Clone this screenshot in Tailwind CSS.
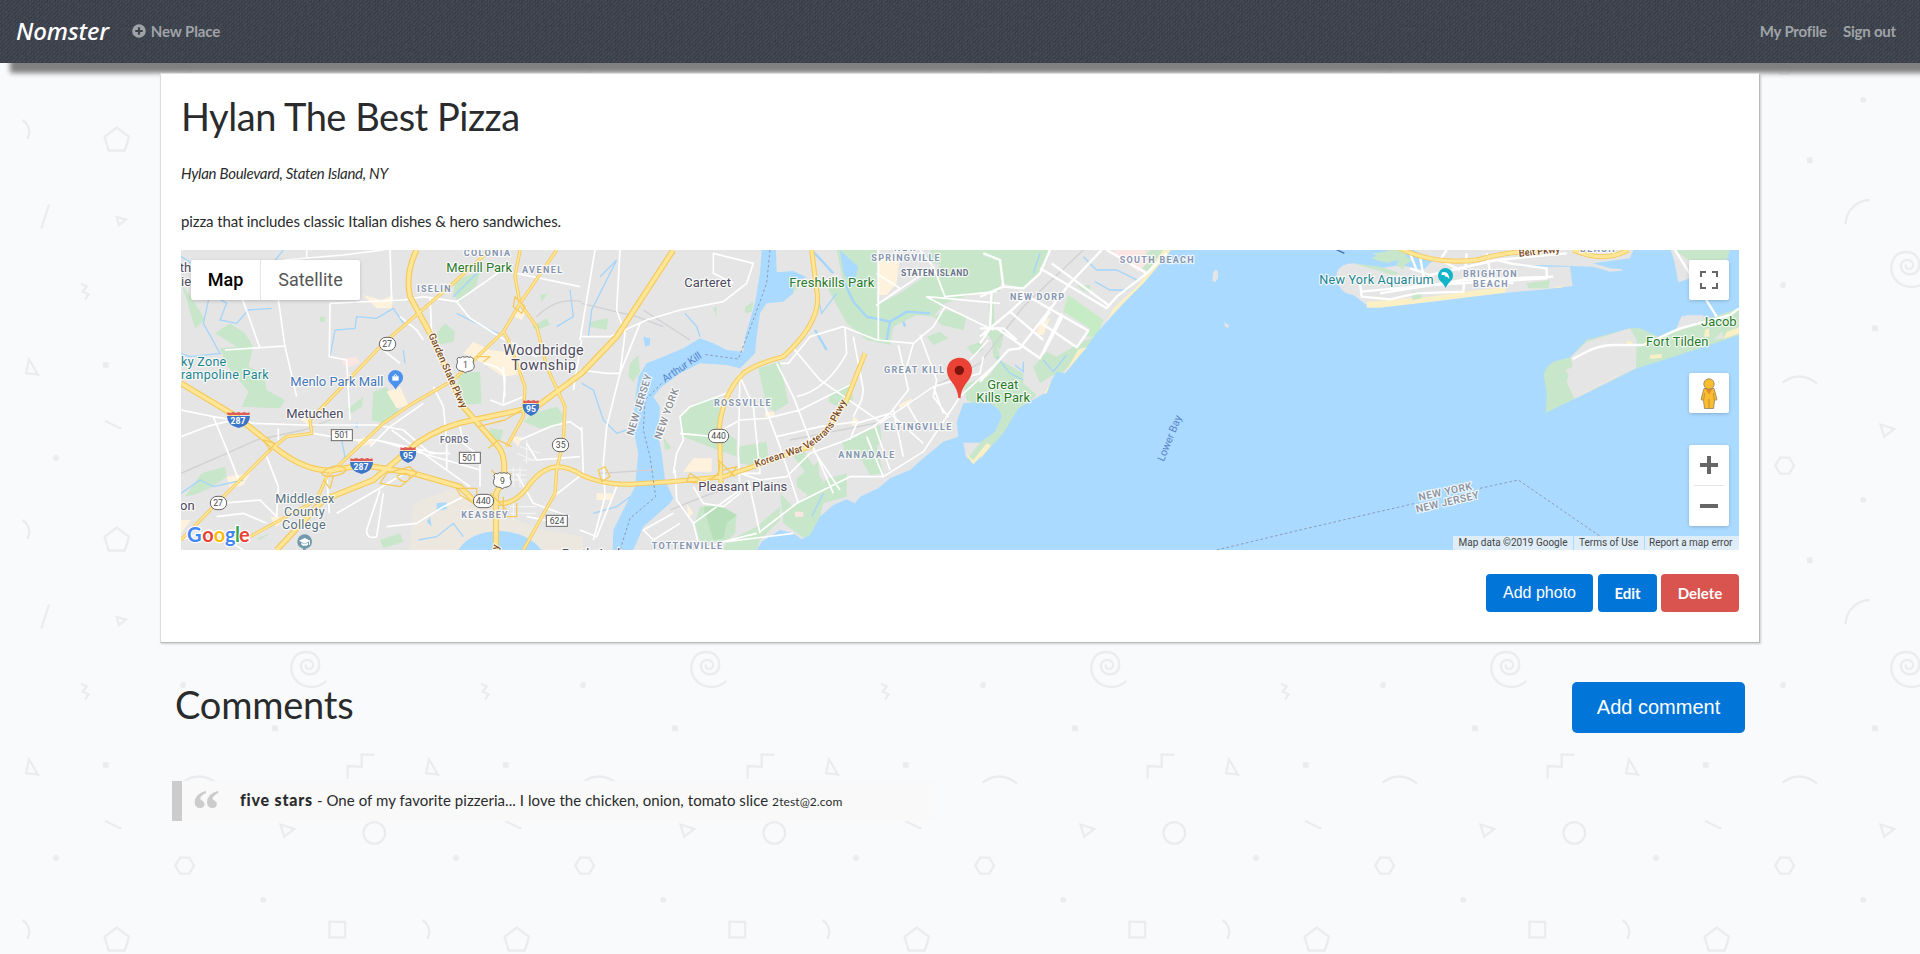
<!DOCTYPE html>
<html lang="en">
<head>
<meta charset="utf-8">
<title>Nomster</title>
<script src="https://cdn.jsdelivr.net/npm/@tailwindcss/browser@4"></script>
</head>
<body class="relative isolate h-[954px] overflow-hidden bg-[#f9fafc] font-[Lato,sans-serif] text-[15px] leading-6 text-[#292b2c]">

<!-- Doodle wallpaper, one 400px tile repeated -->
<svg class="absolute inset-0 -z-10 h-full w-full" aria-hidden="true">
  <defs>
    <pattern id="doodles" width="400" height="400" patternUnits="userSpaceOnUse">
      <g fill="none" stroke="#ebecee" stroke-width="2.3">
        <path d="M326.300 280.700C321.500 285.500 316.500 286.900 311.700 286.900C299.500 286.900 291.300 278.500 291.300 268C291.300 258 297.500 252 306 252C314.500 252 319.300 257.500 319.300 264.500C319.300 270.500 315.500 274.300 310 274.300C304.500 274.300 301 270.500 301 266C301 261.800 304 259.800 307.500 259.800C311 259.800 313 262.500 313 265C313 267.600 311 269 308.700 269C306.300 269 305.300 267 306 264.700"/>
        <path d="M80.700 283.700L86.700 286.300L82.700 291.700L88.700 294.300L85.300 299.300"/>
        <path d="M347.700 378.700V366L361.700 366.700V354.300L374.300 355"/>
        <path d="M29 359.500L38 374.500L26.200 373.200Z"/>
        <path d="M182.700 382.700Q190 376.500 199 376.500Q209 376.500 217.300 384"/>
        <path d="M105 21L121.300 28.700"/>
        <path d="M280.500 24.500L294.300 29L284.200 36.500Z"/>
        <circle cx="374.300" cy="33" r="10.800"/>
        <path d="M175.200 65.700L180 57.700H189.300L194 65.700L189.300 73.700H180Z"/>
        <rect x="329.500" y="121.800" width="15.700" height="15.700"/>
        <path d="M22.700 120Q33 128.500 27.200 139"/>
        <path d="M116.700 127.500L129 136.700L124.900 150.500H108.700L104.600 136.700Z"/>
        <path d="M245.700 224C245.700 211 256 200.500 270 200"/>
        <path d="M41.300 228.700L49 204.700"/>
        <path d="M116.800 217L126 219.600L119 225Z"/>
      </g>
      <g fill="#ebecee">
        <circle cx="183" cy="285" r="2.900"/><circle cx="56" cy="58" r="2.900"/><circle cx="263.300" cy="99.700" r="2.900"/>
        <rect x="272.200" y="325.500" width="5.700" height="5.700"/><rect x="102.800" y="362.200" width="5.700" height="5.700"/><rect x="206.900" y="157.500" width="5.700" height="5.700"/>
      </g>
    </pattern>
  </defs>
  <rect width="100%" height="100%" fill="url(#doodles)"/>
</svg>

<header class="relative flex h-[63px] items-center justify-between bg-[#3c424c] pl-4 pr-6 shadow-[10px_10px_5px_#808080]">
  <!-- Denim texture -->
  <svg class="absolute inset-0 h-full w-full" aria-hidden="true">
    <defs>
      <pattern id="denim" width="8" height="4" patternUnits="userSpaceOnUse" shape-rendering="crispEdges">
        <rect width="8" height="4" fill="#3c434e"/>
        <path fill="#363b45" d="M0 3h2v1H0zM1 2h2v1H1zM2 1h1v1H2zM3 0h1v1H3zM4 3h1v1H4zM5 2h1v1H5zM6 1h2v1H6zM7 0h1v1H7z"/>
        <path fill="#464a50" d="M2 3h1v1H2zM3 2h1v1H3zM5 0h1v1H5zM6 3h1v1H6zM0 1h1v1H0z"/>
      </pattern>
      <filter id="weave" x="0" y="0" width="100%" height="100%">
        <feTurbulence type="fractalNoise" baseFrequency=".6 .25" numOctaves="2" seed="4"/>
        <feColorMatrix type="matrix" values="0 0 0 0 .1  0 0 0 0 .11  0 0 0 0 .13  1.400 0 0 0 -.5"/>
      </filter>
    </defs>
    <rect width="100%" height="100%" fill="url(#denim)"/>
    <rect width="100%" height="100%" filter="url(#weave)" opacity=".45"/>
  </svg>
  <nav class="relative flex items-center pb-px">
    <a class="font-['Noto_Sans',sans-serif] text-2xl font-medium italic tracking-[-0.1px] text-white">Nomster</a>
    <a class="ml-[23px] flex items-center gap-[5px] font-bold tracking-[-0.1px] text-[#a0a3a8]">
      <svg class="h-3.5 w-3.5" viewBox="0 0 14 14"><path fill="#a0a3a8" fill-rule="evenodd" d="M7 .2a6.800 6.800 0 1 0 0 13.600A6.800 6.800 0 0 0 7 .2zM5.900 3.200h2.200v2.700h2.700v2.200H8.100v2.700H5.900V8.100H3.200V5.900h2.700z"/></svg>
      New Place
    </a>
  </nav>
  <nav class="relative flex gap-4 pb-px font-bold tracking-[-0.2px] text-[#a0a3a8]">
    <a>My Profile</a>
    <a>Sign out</a>
  </nav>
</header>

<main class="relative px-40 pt-[10px]">
  <section class="h-[570px] border border-[#dcdcdc] border-b-[#b9b9b9] border-r-[#b9b9b9] bg-white px-5 shadow-[1px_1px_2px_#cccccc]">
    <h1 class="pt-5 text-[38px] leading-[44px] tracking-[-0.47px]">Hylan The Best Pizza</h1>
    <p class="mt-[23px] italic tracking-[-0.28px]">Hylan Boulevard, Staten Island, NY</p>
    <p class="mt-6 tracking-[-0.12px]">pizza that includes classic Italian dishes &amp; hero sandwiches.</p>

    <div class="relative mt-[17px] h-[300px] w-[1558px] overflow-hidden">
      <svg class="h-[300px] w-[1558px]" viewBox="33 30 4674 900" font-family="Roboto, sans-serif">
        <rect x="33" y="30" width="4674" height="900" fill="#e5e5e5"/>

        <!-- Parks -->
        <g fill="#c8e6c9">
          <path d="M33 130L75 190L105 240L75 265L50 180zM135 280L180 250L225 280L250 320L235 380L280 400L290 450L345 480L330 505L215 500L235 455L170 375L150 325L200 320zM610 455L650 440L680 495L690 520L640 550L605 540zM870 400L930 395L935 490L885 495L860 440zM855 120L930 95L920 135L870 185L850 165zM790 290L825 250L855 275L850 305L800 315zM960 565L1000 570L990 605L955 600zM1090 520L1160 500L1185 530L1165 560L1110 565L1060 545zM45 770L95 700L165 680L170 710L120 745L70 765zM1085 260L1130 235L1140 255L1100 270zM450 230h15v15h-15zM530 510L580 470L575 500L545 520zM1110 165l25-5-20 25zM260 895l40-15-30 20zM630 900l60-20 10 25-60 20z"/>
          <g transform="translate(1230)">
            <path d="M535 385L600 365L625 490L585 515L560 500zM300 530L345 490L420 465L425 570L470 600L470 650L400 625L310 590zM475 620L560 605L565 660L540 680L480 670zM150 370l25-25 5 50-20 30-15-15zM580 100L640 100L650 150L570 175zM770 30L1260 30L1260 155L1180 160L1095 190L1060 230L1010 225L940 260L930 315L860 300L800 250L740 140L790 130zM1060 230L1100 210L1160 230L1150 270L1085 255zM1040 290l40-15 25 20-45 20zM1160 320L1215 300L1200 270L1210 330L1180 345zM750 460l60-30 10 50-35 25-40-20zM785 605L900 555L905 600L890 620L910 700L870 705L845 660L800 650zM640 650l30-20 60 95-20 15zM650 715L715 665L720 750L690 770L650 740zM745 715L800 700L800 770L730 790L715 850L680 900L610 850L600 760L640 800zM360 800L420 795L470 825L465 880L440 905L360 905L345 850zM440 905L530 860L600 800L600 840L540 900L530 930H430zM1150 435L1260 395L1260 530L1160 480zM30 245l55-10-5 35-50-10zM250 590L275 625L255 630zM400 205l10-5 0 30zM495 200l25-15-5 30-20 5zM1215 275l60-5-15 60z"/>
            <path fill="#e5e5e5" d="M890 30H1055L1030 60L1085 75L960 160L890 195z"/>
            <path fill="#b7dfb9" d="M370 800L420 797L470 825L440 850L430 895L400 900z"/>
          </g>
          <g transform="translate(2430)">
            <path d="M-10 30L210 30L170 115L130 145L70 130L20 150L60 120L30 60zM40 150L45 300L70 380L40 350L25 200zM60 360L130 400L130 430L170 465L120 510L70 590L0 655L-50 672L0 608L45 575L65 530L30 488L-20 480L20 420zM160 380L200 335L230 350L280 320L340 290L320 325L250 395L210 410L180 430zM485 50l30-20h60l-60 70-30-15zM290 135l40 0 0 25-25-10z"/>
            <path fill="#c5ecc4" d="M265 165L370 240L350 290L320 290L330 265L250 215z"/>
          </g>
        </g>
        <!-- Commercial areas -->
        <g fill="#fff2dc">
          <path d="M580 165L635 180L670 165L665 205L620 205zM650 455L690 440L715 495L680 505zM880 340L910 305L960 330L1040 340L1060 400L1000 410L940 370zM1035 210l35 0-15 30-20-10zM170 710L240 700L220 735L180 745zM560 600l30-10 20 20-40 10zM390 540l30-10 10 30zM1020 590l35 0-10 30zM33 840h30l-30 40zM300 830l50 0-30 30z"/>
          <path d="M1570 655h55v40h-85zM2125 45L2190 45L2180 130L2150 165H2125zM2615 240l25-5-20 50-25 0zM2185 495l40-20 0 15-30 20zM1785 515h28v15h-28zM1550 790l20 30-15 12zM1280 760h45v20h-45zM2050 530l15 10-5 20-15-5z"/>
          <path fill="#fbe6e4" d="M520 355l40-5 10 20-30 10-22-5zM2830 30l95 0 10 35-30 30-65-50zM1875 815h25v15h-25z"/>
          <path fill="#ece8df" d="M730 790L850 745L930 800L1120 870L1240 890V930H720z"/>
        </g>

        <!-- Water -->
        <g fill="#aadaff">
          <path d="M1775 30L1770 100L1755 190L1725 290L1720 335L1670 330L1630 310L1590 295L1540 325L1480 350L1430 370L1405 410L1395 480L1390 570L1405 640L1400 690L1395 740L1370 790L1330 870L1328 930H1390L1420 860L1500 790L1510 775L1485 720L1475 640L1465 590L1470 500L1450 470L1475 440L1530 400L1590 370L1670 375L1710 385L1755 340L1760 290L1770 220L1790 190L1840 185L1870 160L1870 125L1910 112L1870 93L1820 97L1818 30z"/>
          <path d="M1760 930L1775 905L1830 870L1870 880L1895 898L1920 885L1950 830L1990 795L2030 778L2055 790L2070 770L2125 745L2160 715L2220 690L2260 655L2320 605L2365 590L2360 545L2380 490L2425 487L2460 488L2488 510L2495 530L2475 575L2430 608L2380 608L2388 650L2410 672L2430 655L2463 620L2500 580L2545 505L2620 462L2660 395L2685 400L2728 340L2748 325L2775 285L2815 240L2860 190L2920 130L2960 85L3003 30H4707V930z"/>
          <path d="M865 930Q900 875 985 873Q1070 875 1115 930zM2010 30L2065 80L2050 140L2020 100zM1420 290l20 5 0 20-15 5zM560 545l5 20-10-5z"/>
          <path d="M770 845l10-15 5 30zM800 790l30-3 0 20-30 5z"/>
        </g>
        <!-- Creeks -->
        <g fill="none" stroke="#a4d5fb" stroke-width="4">
          <path d="M33 50L90 85L120 160L170 190L150 240L200 250L235 210L305 205M120 160L100 250L150 340L60 350L33 340M480 350L495 270L555 265L560 230L620 235L670 205L700 250M860 220L960 270L985 280M33 760L90 720L130 740L220 720M515 600L525 650L500 690M850 170L930 90M340 30L300 80L200 90M700 330L705 370M1200 150L1210 230L1160 260M745 900L800 890L850 850L880 890"/>
          <path stroke-width="7" d="M2020 120L2050 185L2090 230L2160 245L2210 215L2280 220M2160 245L2150 300M2200 245l5 15M1930 35L1990 100M1935 270L1970 330"/>
          <path d="M1255 290L1265 210L1340 60L1290 110M1235 430L1270 450L1300 540L1340 580L1370 570M1545 220L1580 260L1590 290M1270 820L1340 800L1380 770M1960 760L1925 830M1945 180L1955 220L2000 160"/>
          <path d="M2590 100L2610 40M2740 50L2780 90L2840 90L2900 120L2870 150L2820 150L2775 125M2480 350L2520 400L2560 420M2620 360L2650 395L2690 345M2535 375l25 20 0-30"/>
        </g>

        <!-- Coney Island and Rockaway -->
        <g transform="translate(3630)">
          <path fill="#e5e5e5" d="M-130 100Q-120 70 -80 70L0 85L60 75L130 90L160 60L100 30H760L750 55L640 70L690 85Q770 90 690 95L640 80L480 75L400 80L570 80L578 138L500 148L380 158L150 180L0 200L-40 195L-80 165Q-130 160 -130 100z"/>
          <path fill="#fbefc6" d="M-40 185L150 170L250 155L380 140L375 158L180 182L0 203H-40zM445 145Q465 125 485 145zM525 143q12-8 22 0z"/>
          <path fill="#c8e6c9" d="M-20 40L70 30L50 60L20 70zM50 75l20-40 10 5-10 50zM95 155l30 0 0 20-28 5zM-80 70l80 10 60 20-20 5zM440 130l70-10-5 25-60 0z"/>
          <path fill="#e5e5e5" d="M872 30H935L930 115L895 127L882 60zM900 240L920 225L990 230L950 265L890 265z"/>
          <path fill="#c8e6c9" d="M885 30H1050L1040 60H925zM1077 205L1000 230L900 260L835 290L780 265L750 265L620 300L570 352L520 365Q490 385 492 410L500 460L497 519L583 477L770 385L850 360L960 325L1077 285z"/>
          <path fill="#e5e5e5" d="M750 265L770 300L768 385L583 477L560 425L565 405L557 390L578 380L572 352L620 305zM893 258L905 228L970 225L960 250L890 275zM1000 300L1025 275L1030 295z"/>
          <path fill="#fbefc6" d="M1077 262L1040 275L1030 297L1077 280zM975 270l12-5 2 25-17 0zM810 345l35-3 0 12-35 2zM740 303h15v10h-15z"/>
          <path fill="#ece6de" d="M583 472L720 400L710 412L600 467z"/>
        </g>
        <path fill="#e5e5e5" d="M3130 95q8-10 14 0v20l-9 12-8-5zM3163 246l14 10-2 8-10-4z"/>
        <path fill="#c8e6c9" d="M3605 55l50-25h60l-20 30-60 5zM3680 70l30-20 15 10-25 20z"/>
        <path d="M3498 28l25 12" stroke="#3f6fae" stroke-width="4"/>
        <g fill="#fbefc6"><path d="M3003 30L2920 130L2860 190L2810 243L2830 205L2900 140L2980 30zM2750 322L2685 400L2725 328zM2620 462L2645 420L2630 460zM2430 657L2463 618L2440 630zM2410 672L2463 615L2450 610L2410 660L2385 640z"/></g>

        <!-- Rail and runways -->
        <path d="M33 700L170 640L260 600L400 570L480 540M1100 230Q1160 170 1235 185M1235 190L1400 230L1480 260M1420 210L1560 300M1500 810L1600 770L1700 735M1860 600L2140 545L2290 440L2430 370L2560 200L2740 30M1290 700L1450 690" fill="none" stroke="#d0d1d4" stroke-width="4"/>

        <!-- Minor roads -->
        <g fill="none" stroke="#fff" stroke-width="5" stroke-linejoin="round">
          <path d="M340 60L520 45L640 30M410 30V55M200 130L240 240L270 325M165 330L345 318M325 180L345 320L380 470M480 190L478 350L530 360L540 540M480 190L700 180L760 170L860 185L940 130L1010 80M660 30L665 180M690 230L740 270L760 300M780 170L785 280M860 185L900 235L1005 300M1040 100L1230 140M33 510L130 530L250 550L400 555L620 555L700 570L780 640L840 640M130 530L175 640L210 730M240 550L230 530L110 560L33 590M325 600V565M430 580L540 600L620 600L800 640M620 600L930 690M665 570L760 640L900 740M470 700L478 820M290 650L325 740L320 830L270 780L150 790M140 830L220 820L290 850M33 900L120 870L220 930M600 620L660 560L760 490M640 330L690 370M790 440L820 500L830 600V690M870 560L880 610L930 650L930 740M960 480L1000 495L1060 470M1000 380L1005 470M940 370Q1005 380 1005 420L1000 490M1050 600L1140 560L1200 545L1235 570M1070 610L1100 660L1230 650M630 750L590 870Q590 900 620 890L640 760M650 860L740 850L820 800L880 770M720 690L620 750L500 820M1070 830L1180 850M1040 700L1090 790L1200 830M1235 300L1210 450M1100 350L1010 300M1150 770L1240 700L1235 560"/>
          <g stroke-width="3" stroke="#f7f7f7"><path d="M1010 690h60M1010 705h60M1010 720h60M1030 680v60M1050 680v60M1020 800h80M1020 820h80M1030 780v60M1050 620l60 20M1040 640l50 20M1060 660h50M1070 600v70"/></g>
          <g transform="translate(1230)">
            <path d="M120 30L110 210L135 280L120 400L80 560L70 670L75 770L40 900M45 30L20 180L0 300M0 290L90 290L200 240L300 210L430 185L500 130L520 70L400 40L400 100L460 130M180 250L120 400L80 400L0 390M0 870L50 890L110 740M280 700L290 640L310 600L300 530L330 500L440 460L480 400M480 410L520 500L540 700L480 700M300 580L400 590M425 570L480 540L560 535L660 510L820 430M480 400L475 640L480 760L430 800L370 790L340 740M590 590L720 560L830 545M590 370L640 470L690 600L760 760M555 500L600 620L655 790M640 325L720 420L900 545M650 470Q740 450 800 340L795 265M600 370L625 370L690 290L790 260L890 300L1000 310L1060 260L1095 200L1040 170L1260 190M820 290L850 450L845 480L820 530M895 30V300M890 100L960 145L890 195L1060 80L1020 30M1060 80L1095 170L1250 155M1095 200L1240 270M1020 285L1070 420L1060 470L1105 530M955 315L985 450L930 520L880 560L800 600L690 640L620 710L540 720L480 700M1000 310L980 380M285 690L290 780L340 850L360 930M340 850L480 750M280 820L190 870L220 900L300 850M505 720L540 880M530 880L430 905L360 930M540 875L650 790L810 710L910 710L1030 635L1140 470L1260 360M885 560L930 690M930 520L1030 610M900 550L1060 440L1200 400L1210 350M860 590L910 710M940 510L970 650M1060 440L1090 520M980 490L1020 560M1170 360L1225 300M700 630L780 750M810 600L830 550L930 520M440 905L640 880"/>
          </g>
          <g transform="translate(2430)">
            <path stroke-width="7" d="M0 425L85 330L120 325L270 130L365 30M180 85L380 205L410 170L500 100L560 40M0 170L70 140L130 145L180 100L210 30M120 155L325 272L290 322L185 250M185 250L210 215M50 265L180 355L245 220M0 265L70 265L110 300M90 215L190 300M70 140L60 60L10 40M250 225L190 340M215 70L385 195M380 30L500 100M90 215L0 290M35 155L30 265L0 310M90 215L150 160"/>
          </g>
          <g transform="translate(3630)">
            <path stroke-width="7" d="M-60 130L-55 170L30 178L110 160L250 155L260 40M-55 155L150 135L500 115L500 85L400 72L350 60L150 105L90 85M0 160L250 120L520 110M90 40L110 90M120 50L135 130M260 110L400 130M320 40L330 95M350 60L560 40M885 30L1010 230M578 357L620 335Q660 315 700 315L790 315L900 265L1050 225L1077 205M200 30L180 60L240 90"/>
          </g>
        </g>

        <!-- Motorways: casing then fill -->
        <g fill="none" stroke-linejoin="round">
          <g stroke="#f5ca5c">
            <path stroke-width="10" d="M33 900L140 790L300 630L350 590L425 580L420 540L640 310L850 130L960 30M240 890L440 780L470 710L640 550L720 495L850 420L1000 275L1050 190L1160 30M1050 30L1035 110L1050 190L1100 260L1130 380L1185 500L1180 600L1160 690L1155 760L1060 930M1000 275L1015 300L1065 440L1060 530L1010 620"/>
            <path stroke-width="18" d="M33 430L200 530L300 610Q390 690 480 692L580 675L730 700L870 740L920 790M740 30Q705 100 720 170L780 280L880 500L985 620Q1010 650 1000 720L978 760V930M320 930L460 780L610 720L740 610Q820 555 910 540L1100 500L1235 400L1340 290L1510 30"/>
            <path stroke-width="15" d="M985 790Q1030 795 1070 745Q1110 685 1160 680Q1200 680 1235 705Q1300 735 1380 733L1500 725L1660 710L1750 680L1920 620Q1990 550 2030 480L2085 340M1653 730L1648 560Q1660 460 1720 400Q1760 370 1840 350Q1960 240 1940 150L1925 30"/>
          </g>
          <g stroke="#ffe596">
            <path stroke-width="5" d="M33 900L140 790L300 630L350 590L425 580L420 540L640 310L850 130L960 30M240 890L440 780L470 710L640 550L720 495L850 420L1000 275L1050 190L1160 30M1050 30L1035 110L1050 190L1100 260L1130 380L1185 500L1180 600L1160 690L1155 760L1060 930M1000 275L1015 300L1065 440L1060 530L1010 620"/>
            <path stroke-width="11" d="M33 430L200 530L300 610Q390 690 480 692L580 675L730 700L870 740L920 790M740 30Q705 100 720 170L780 280L880 500L985 620Q1010 650 1000 720L978 760V930M320 930L460 780L610 720L740 610Q820 555 910 540L1100 500L1235 400L1340 290L1510 30"/>
            <path stroke-width="9" d="M985 790Q1030 795 1070 745Q1110 685 1160 680Q1200 680 1235 705Q1300 735 1380 733L1500 725L1660 710L1750 680L1920 620Q1990 550 2030 480L2085 340M1653 730L1648 560Q1660 460 1720 400Q1760 370 1840 350Q1960 240 1940 150L1925 30"/>
          </g>
          <g stroke="#f5ca5c" stroke-width="4">
            <path d="M455 700q30-30 60-20q30 10-10 25q-40 10-50-5zM460 720l20 25 10-35M650 700L720 680L740 700L690 740L630 730zM680 710q30-20 40 0q-10 30-40 0M860 745h60v50l-50-30zM965 690l30 40 30-30M960 760l50 50M1000 770v60h40v-40M955 625l30-25 40 20M920 350l40 0-20 15M1035 170l30 30-10 20-25-20zM1285 690l20-10 15 30-25 15zM1610 720q50-10 35-60q30 30 50 50M1630 735l-80-10 10-25 30 20M1660 690l40-10-20 30M925 560l80-20 50-30M280 600l20 30 15-20z"/>
          </g>
          <path stroke="#f5ca5c" stroke-width="15" d="M3690 25Q3790 75 3920 60Q4050 25 4110 40M4210 30Q4300 70 4375 30"/>
          <path stroke="#ffe596" stroke-width="10" d="M3690 25Q3790 75 3920 60Q4050 25 4110 40M4210 30Q4300 70 4375 30"/>
        </g>

        <!-- State line -->
        <path fill="none" stroke="#8e9bb0" stroke-width="3" stroke-dasharray="8 7" d="M1800 30L1790 130L1735 280L1705 357L1600 343M1475 430L1425 480L1420 570L1440 650L1457 770L1380 835L1350 930M3140 930L3390 870L3735 790M3930 745L4045 720L4270 875L4330 915"/>

        <!-- Labels -->
        <g stroke="#fff" stroke-opacity=".8" stroke-width="7" stroke-linejoin="round" style="paint-order:stroke">
          <g fill="#8695b0" font-size="27" font-weight="700">
            <text x="881" y="48" textLength="139">COLONIA</text><text x="1056" y="99" textLength="120">AVENEL</text><text x="741" y="156" textLength="101">ISELIN</text>
            <text x="874" y="833" textLength="139">KEASBEY</text><text x="1632" y="497" textLength="170">ROSSVILLE</text><text x="2142" y="399" textLength="180">GREAT KILL</text>
            <text x="2142" y="570" textLength="202">ELTINGVILLE</text><text x="2005" y="654" textLength="168">ANNADALE</text><text x="1445" y="926" textLength="211">TOTTENVILLE</text>
            <text x="2172" y="34" textLength="68">NEW</text><text x="2104" y="62" textLength="205">SPRINGVILLE</text><text x="2520" y="180" textLength="162">NEW DORP</text>
            <text x="2849" y="69" textLength="222">SOUTH BEACH</text><text x="3879" y="111" textLength="161">BRIGHTON</text><text x="3909" y="141" textLength="104">BEACH</text><text x="4230" y="37" textLength="104">BEACH</text>
          </g>
          <g fill="#6a7288" font-size="26" font-weight="700"><text x="810" y="609" textLength="85">FORDS</text><text x="2193" y="108" textLength="202">STATEN ISLAND</text></g>
          <g fill="#4e4a60" font-size="39"><text x="1543" y="140" textLength="140">Carteret</text><text x="349" y="533" textLength="171">Metuchen</text><text x="1585" y="752" textLength="267">Pleasant Plains</text><text x="1000" y="346" font-size="43" textLength="241">Woodbridge</text><text x="1024" y="391" font-size="43" textLength="194">Township</text><text x="30" y="811">on</text><text x="29" y="97">th</text><text x="33" y="137">ie</text><text x="1175" y="953" textLength="230">Perth Amboy</text></g>
          <g fill="#297a29" font-size="39"><text x="829" y="95" textLength="197">Merrill Park</text><text x="1858" y="140" textLength="255">Freshkills Park</text><text x="2452" y="448" textLength="93">Great</text><text x="2419" y="487" textLength="161">Kills Park</text><text x="4428" y="319" textLength="187">Fort Tilden</text><text x="4593" y="257" textLength="107">Jacob</text></g>
          <g fill="#1d8590" font-size="38"><text x="33" y="377" textLength="136">ky Zone</text><text x="33" y="416" textLength="263">rampoline Park</text><text x="3448" y="131" textLength="343">New York Aquarium</text></g>
          <text x="361" y="437" font-size="39" textLength="279" fill="#4878b8">Menlo Park Mall</text>
          <g fill="#587080" font-size="38"><text x="316" y="788" textLength="177">Middlesex</text><text x="342" y="827" textLength="122">County</text><text x="336" y="866" textLength="131">College</text></g>
          <g fill="#8c8f96" font-size="31" font-weight="500"><text transform="translate(1390 588) rotate(-73)" textLength="190">NEW JERSEY</text><text transform="translate(1472 600) rotate(-70)" textLength="160">NEW YORK</text><text transform="translate(3748 782) rotate(-12)" textLength="163">NEW YORK</text><text transform="translate(3740 818) rotate(-13)" textLength="193">NEW JERSEY</text></g>
          <g fill="#7c4a1c" font-size="30" font-weight="500">
            <path id="gsp" d="M775 285L855 465L885 530" fill="none" stroke="none"/><path id="kwv" d="M1758 682L1890 637Q1960 605 1990 560Q2030 490 2055 430" fill="none" stroke="none"/>
            <text><textPath href="#gsp" textLength="243">Garden State Pkwy</textPath></text>
            <text><textPath href="#kwv" textLength="352">Korean War Veterans Pkwy</textPath></text>
            <text transform="translate(4047 50) rotate(-6)" textLength="125">Belt Pkwy</text><text transform="translate(985 930) rotate(-80)">y</text>
          </g>
        </g>
        <g fill="#5b85cc" font-size="32"><text transform="translate(1485 428) rotate(-34)" textLength="135">Arthur Kill</text><text transform="translate(2981 666) rotate(-68)" textLength="145">Lower Bay</text></g>

        <!-- Route shields -->
        <g font-size="26" text-anchor="middle" fill="#4a4a4a">
          <g fill="#fff" stroke="#666" stroke-width="3">
            <rect x="628" y="292" width="49" height="40" rx="20"/><rect x="121" y="769" width="49" height="40" rx="20"/><rect x="1147" y="595" width="49" height="40" rx="20"/><rect x="910" y="763" width="61" height="40" rx="20"/><rect x="1615" y="568" width="61" height="40" rx="20"/>
            <rect x="484" y="569" width="63" height="33"/><rect x="868" y="637" width="63" height="33"/><rect x="1129" y="826" width="63" height="33"/>
            <path d="M865 352q8 4 12-2q8 3 14 0q8 4 12 0l8 8q-4 9 1 16q4 14-12 19q-8 0-14 5q-6-5-14-5q-16-5-12-19q5-7 1-16z"/><path transform="translate(111 348)" d="M865 352q8 4 12-2q8 3 14 0q8 4 12 0l8 8q-4 9 1 16q4 14-12 19q-8 0-14 5q-6-5-14-5q-16-5-12-19q5-7 1-16z"/>
          </g>
          <text x="651" y="322">27</text><text x="144" y="798">27</text><text x="1172" y="624">35</text><text x="940" y="792">440</text><text x="1646" y="597">440</text><text x="515" y="594">501</text><text x="898" y="663">501</text><text x="1161" y="852">624</text><text x="886" y="384">1</text><text x="997" y="731">9</text>
          <g font-weight="700" fill="#fff">
            <g><path fill="#3d76c9" d="M171 528h69q0 28-34 36q-35-8-35-36z"/><path fill="#de5b56" d="M172 517l9 2 8-3 9 3 8-3 8 3 9-3 8 3 8-2v8h-67z"/><text x="204" y="552">287</text></g>
            <g transform="translate(369 138)"><path fill="#3d76c9" d="M171 528h69q0 28-34 36q-35-8-35-36z"/><path fill="#de5b56" d="M172 517l9 2 8-3 9 3 8-3 8 3 9-3 8 3 8-2v8h-67z"/><text x="204" y="552">287</text></g>
            <path fill="#3d76c9" d="M690 633h48q4 26-24 36q-28-10-24-36zM1059 492h48q4 26-24 36q-28-10-24-36z"/><path fill="#de5b56" d="M691 622l8 2 7-3 8 3 8-3 7 3 8-2v8h-46zM1060 481l8 2 7-3 8 3 8-3 7 3 8-2v8h-46z"/><text x="714" y="658">95</text><text x="1083" y="516">95</text>
          </g>
        </g>

        <!-- Place pins -->
        <path fill="#4a92ee" d="M677 390a23 23 0 0 0-23 23c0 16 17 20 23 36c6-16 22-20 22-36a23 23 0 0 0-22-23z"/><path fill="#fff" d="M667 409h19v13h-19z"/><path fill="none" stroke="#fff" stroke-width="3" d="M672 410v-3q5-7 9 0v3"/>
        <path fill="#14b4c8" d="M3827 84a23 23 0 0 0-23 23c0 16 17 20 23 37c6-17 22-21 22-37a23 23 0 0 0-22-23z"/><path fill="#fff" d="M3816 97q20-6 22 20q-7-10-12-7l-3-6q-6 2-9 0z"/>
        <circle cx="404" cy="905" r="22" fill="#7299ac"/><path d="M403 912l0 26" stroke="#7299ac" stroke-width="8"/><path fill="#fff" d="M404 894l17 8-17 9-17-9zM394 908l10 5 10-5v6q-10 7-20 0zM417 904h3v10h-3z"/>

        <!-- Marker -->
        <path fill="#ea4335" d="M2368 353a37 37 0 0 0-37 37c0 34 31 40 34 83a4 4 0 0 0 7 0c3-43 34-49 34-83a37 37 0 0 0-38-37z"/><circle cx="2368" cy="391" r="14" fill="#7c130d"/>

        <!-- Google wordmark -->
        <text y="907" font-size="60" font-weight="700" stroke="#fff" stroke-width="7" style="paint-order:stroke" font-family="Lato, sans-serif"><tspan x="51" fill="#4285f4">G</tspan><tspan x="97" fill="#ea4335">o</tspan><tspan x="131" fill="#fbbc05">o</tspan><tspan x="165" fill="#4285f4">g</tspan><tspan x="195" fill="#34a853">l</tspan><tspan x="207" fill="#ea4335">e</tspan></text>
      </svg>

      <div class="absolute left-[10px] top-[10px] flex h-10 rounded-[2px] bg-white font-[Roboto,sans-serif] text-[18px] leading-10 shadow-[0_1px_4px_-1px_rgba(0,0,0,0.3)]">
        <span class="w-[70px] border-r border-[#e6e6e6] text-center font-medium text-black">Map</span>
        <span class="w-[99px] text-center text-[#565656]">Satellite</span>
      </div>

      <div class="absolute right-[10px] top-[10px] flex w-10 flex-col">
        <button class="flex h-10 items-center justify-center rounded-[2px] bg-white shadow-[0_1px_4px_-1px_rgba(0,0,0,0.3)]"><svg class="h-[18px] w-[18px]" viewBox="0 0 18 18"><path fill="#666" d="M0 0h6v2H2v4H0zM12 0h6v6h-2V2h-4zM0 12h2v4h4v2H0zM16 12h2v6h-6v-2h4z"/></svg></button>
        <button class="mt-[73px] flex h-10 items-center justify-center rounded-[2px] bg-white shadow-[0_1px_4px_-1px_rgba(0,0,0,0.3)]"><svg class="-ml-px h-[31px] w-[18px]" viewBox="0 0 18 31"><path fill="#fbbd2e" stroke="#8d7f65" stroke-width=".8" d="M4 10.500h10l3 11-2.500 1-1 8h-9l-1-8-2.500-1z"/><path stroke="#9a8040" stroke-width=".7" d="M9 21v9M4.500 15l-.8 7M13.500 15l.7 7"/><path fill="#e58a2b" d="M5.200 10.500h7.600L9 16.500z"/><circle cx="9" cy="6" r="5.200" fill="#fbbd2e" stroke="#8d7f65" stroke-width=".8"/></svg></button>
        <div class="mt-8 flex h-[81px] flex-col items-center rounded-[2px] bg-white shadow-[0_1px_4px_-1px_rgba(0,0,0,0.3)]">
          <svg class="mt-[11px] h-[18px] w-[18px]" viewBox="0 0 18 18"><path fill="#666" d="M7 0h4v7h7v4h-7v7H7v-7H0V7h7z"/></svg>
          <i class="mt-[11px] block h-px w-[30px] bg-[#e6e6e6]"></i>
          <i class="mt-[18px] block h-1 w-[18px] bg-[#666]"></i>
        </div>
      </div>

      <div class="absolute bottom-0 right-0 flex h-[14px] gap-px font-[Roboto,sans-serif] text-[10px] leading-[14px] text-[#444]">
        <span class="w-[120px] whitespace-nowrap bg-[#f5f5f5]/70 text-center">Map data ©2019 Google</span><span class="w-[70px] whitespace-nowrap bg-[#f5f5f5]/70 pl-[5px]">Terms of Use</span><span class="w-[94px] whitespace-nowrap bg-[#f5f5f5]/70 pl-1">Report a map error</span>
      </div>
    </div>

    <div class="mt-6 flex justify-end text-white">
      <button class="h-[38px] w-[107px] rounded-[4px] bg-[#0275d8] font-['Liberation_Sans',sans-serif] text-base">Add photo</button>
      <button class="ml-[5px] h-[38px] w-[59px] rounded-[4px] bg-[#0275d8] pb-px font-bold tracking-[-0.1px]">Edit</button>
      <button class="ml-1 h-[38px] w-[78px] rounded-[4px] bg-[#d9534f] pb-px font-bold">Delete</button>
    </div>
  </section>

  <div class="mt-[39px] flex items-start justify-between pl-[15px] pr-[15px]">
    <h2 class="text-[38px] leading-[44px] tracking-[-0.2px]">Comments</h2>
    <button class="h-[51px] w-[173px] rounded-[5px] bg-[#0275d8] pb-px font-['Liberation_Sans',sans-serif] text-xl text-white">Add comment</button>
  </div>

  <blockquote class="ml-3 mt-12 flex h-10 w-[763px] items-start overflow-hidden border-l-[10px] border-[#ccc] bg-[#f9f9f9] pl-[10px]">
    <span class="-mt-[3px] w-[48px] font-['Liberation_Serif',serif] text-[56px] font-bold leading-[64px] text-[#ccc]">“</span>
    <p class="whitespace-nowrap pt-[7px]"><strong class="text-base font-black tracking-[0.8px]">five stars</strong><span class="tracking-[0.06px]"> - One of my favorite pizzeria... I love the chicken, onion, tomato slice</span> <small class="text-xs tracking-[0.1px]">2test@2.com</small></p>
  </blockquote>
</main>
</body>
</html>
